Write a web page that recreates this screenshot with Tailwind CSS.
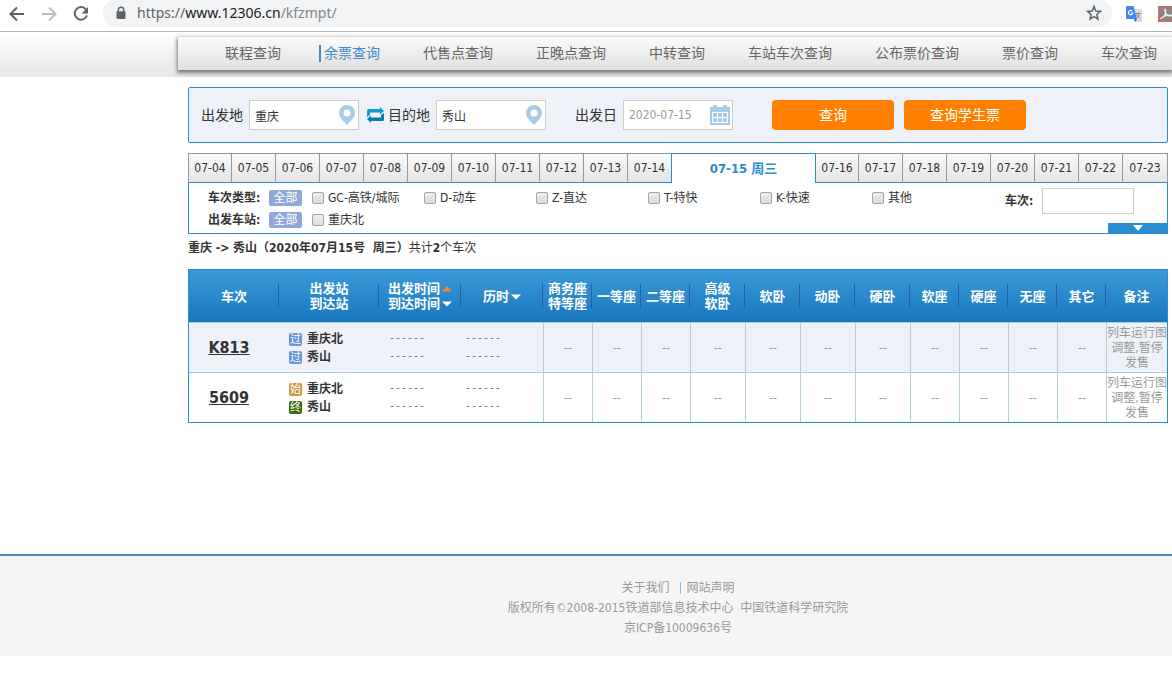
<!DOCTYPE html>
<html lang="zh-CN">
<head>
  <meta charset="UTF-8" />
  <meta name="viewport" content="width=device-width, initial-scale=1.0" />
  <title>余票查询</title>
  <script src="https://cdn.jsdelivr.net/npm/@tailwindcss/browser@4"></script>
</head>
<body class="bg-white text-xs text-[#333] overflow-x-hidden font-['DejaVu_Sans_Condensed','Noto_Sans_CJK_SC',sans-serif]">

  <!-- browser toolbar -->
  <div class="flex items-start h-8 border-b border-[#b4b5b7] overflow-hidden">
    <div class="flex items-center gap-3 h-[27px] pl-[7px] pr-[12px] shrink-0">
      <button type="button" aria-label="后退"><svg class="block size-5" viewBox="0 0 20 20" fill="none" stroke="#5f6368" stroke-width="2"><path d="M17 10H4M10 3.500L3.500 10l6.500 6.500"/></svg></button>
      <button type="button" aria-label="前进"><svg class="block size-5" viewBox="0 0 20 20" fill="none" stroke="#bcbec1" stroke-width="2"><path d="M3 10h13M10 3.500l6.500 6.500L10 16.500"/></svg></button>
      <button type="button" aria-label="重新加载"><svg class="block size-5" viewBox="0 0 20 20"><path d="M15 5.500A6.300 6.300 0 1 0 16 11.500" fill="none" stroke="#5f6368" stroke-width="2"/><path d="M17 3v6.500h-6.500z" fill="#5f6368"/></svg></button>
    </div>
    <div class="flex items-center flex-1 h-7 -mt-px pl-3 pr-2 rounded-full bg-[#f1f3f4]">
      <svg class="block w-3 h-[14px] shrink-0" viewBox="0 0 12 14"><path d="M3.300 6V4a2.700 2.700 0 0 1 5.400 0v2" fill="none" stroke="#5f6368" stroke-width="1.400"/><rect x="1.500" y="5.200" width="9" height="7.800" rx="1" fill="#5f6368"/></svg>
      <div role="textbox" aria-label="地址" class="flex-1 pl-[10px] text-sm leading-5 text-[#80868b] font-['Noto_Sans',sans-serif]"><span class="text-[#5f6368]">https://</span><span class="text-[#202124]">www.12306.cn</span>/kfzmpt/</div>
      <button type="button" aria-label="收藏"><svg class="block size-5" viewBox="0 0 20 20" fill="none" stroke="#5f6368" stroke-width="1.500"><path d="M10 3.600l1.800 4.400 4.700.4-3.600 3.100 1.100 4.600-4-2.500-4 2.500 1.100-4.600L3.500 8.400l4.700-.4z"/></svg></button>
    </div>
    <div class="flex items-center h-[27px] gap-4 pl-[14px] w-[60px] shrink-0 overflow-hidden">
      <svg class="block size-4 shrink-0" viewBox="0 0 16 16"><path d="M6 3h9a1 1 0 0 1 1 1v11a1 1 0 0 1-1 1H9z" fill="#dadce0"/><path d="M9.500 7.500h5M12 6.500v1M13.500 7.500c-.5 2-1.800 3.500-3.500 4.500M10.500 8.500c.7 1.700 2 2.800 3.500 3.500" fill="none" stroke="#5f8f9f"/><path d="M1 0h6.500L11 13H1a1 1 0 0 1-1-1V1a1 1 0 0 1 1-1z" fill="#4285f4"/><path d="M8 13h3l-2 3z" fill="#2b5fc7"/><path d="M6.300 5.200A2.200 2.200 0 1 0 6.800 7H4.800" fill="none" stroke="#fff" stroke-width="1.200"/></svg>
      <svg class="block size-4 shrink-0" viewBox="0 0 16 16"><rect x=".5" y=".5" width="15" height="15" fill="#8d8585" stroke="#e0665c"/><path d="M3 12.500c3-1.500 5-5 4.600-8.500-.2-1.300-1-1-.8.300.4 2.700 2.400 5.600 6 5.700 1.500 0 1.500-1-.3-1-3.500 0-6.500 1-9 3-.9.700-.9.800-.5.500z" fill="none" stroke="#f5f0f0" stroke-width="1.100"/></svg>
    </div>
  </div>

  <!-- site navigation -->
  <div class="h-[45px] pt-[5px] pl-[178px] bg-linear-to-b from-white to-[#e7e7e7]">
    <nav class="flex items-center gap-[43px] h-[33px] pl-[47px] text-sm leading-[17px] text-[#666] whitespace-nowrap bg-linear-to-b from-[#fbfbfb] to-[#e0e0e0] shadow-[0_2px_4px_1px_#777]">
      <a href="#">联程查询</a>
      <a href="#" class="-ml-[5px] pl-[3px] border-l-2 border-[#428bca] text-[#428bca]">余票查询</a>
      <a href="#">代售点查询</a>
      <a href="#">正晚点查询</a>
      <a href="#">中转查询</a>
      <a href="#">车站车次查询</a>
      <a href="#">公布票价查询</a>
      <a href="#">票价查询</a>
      <a href="#">车次查询</a>
    </nav>
  </div>

  <main class="pl-[188px] pr-1 pt-[10px]">
    <!-- search form -->
    <form class="flex items-center h-14 pl-3 border border-[#298cce] rounded-xs bg-[#eef1f8] text-sm">
      <label for="from" class="w-12">出发地</label>
      <div class="relative">
        <input id="from" type="text" value="重庆" class="block w-[110px] h-[30px] pl-[5px] border border-[#cfcdc7] bg-white text-xs" />
        <svg class="absolute right-1 top-[5px] w-4 h-5" viewBox="0 0 16 20"><path d="M8 0a8 8 0 0 1 8 8c0 4.500-4.500 8-8 12C4.500 16 0 12.500 0 8a8 8 0 0 1 8-8zm0 4.500a3.500 3.500 0 1 0 0 7 3.500 3.500 0 0 0 0-7z" fill="#a9cbe6" fill-rule="evenodd"/></svg>
      </div>
      <button type="button" aria-label="交换出发地和目的地" class="ml-2 mr-1"><svg class="block w-[17px] h-4" viewBox="0 0 17 16"><path d="M0 10V3.500A1.500 1.500 0 0 1 1.500 2H13V0l4 4-4 3.500V5.500H3V8z" fill="#0a9bd0"/><path d="M17 6v6.500a1.500 1.500 0 0 1-1.500 1.500H4v2l-4-4 4-3.500v2h10V8z" fill="#087fab"/></svg></button>
      <label for="to" class="w-12">目的地</label>
      <div class="relative">
        <input id="to" type="text" value="秀山" class="block w-[110px] h-[30px] pl-[5px] border border-[#cfcdc7] bg-white text-xs" />
        <svg class="absolute right-1 top-[5px] w-4 h-5" viewBox="0 0 16 20"><path d="M8 0a8 8 0 0 1 8 8c0 4.500-4.500 8-8 12C4.500 16 0 12.500 0 8a8 8 0 0 1 8-8zm0 4.500a3.500 3.500 0 1 0 0 7 3.500 3.500 0 0 0 0-7z" fill="#a9cbe6" fill-rule="evenodd"/></svg>
      </div>
      <label for="date" class="w-12 ml-[29px]">出发日</label>
      <div class="relative">
        <input id="date" type="text" value="2020-07-15" class="block w-[110px] h-[30px] pl-[5px] border border-[#cfcdc7] bg-white text-xs text-[#999]" />
        <svg class="absolute right-[3px] top-[5px] w-5 h-5" viewBox="0 0 20 20"><path d="M0 2h3V0h4v2h6V0h4v2h3v18H0z" fill="#a9cbe6"/><path d="M2 7h16v11H2z" fill="#fff"/><path d="M3 8h4v4H3zM8 8h4v4H8zM13 8h4v4h-4zM3 13h4v4H3zM8 13h4v4H8zM13 13h4v4h-4z" fill="#a9cbe6"/></svg>
      </div>
      <button type="submit" class="w-[122px] h-[30px] ml-[39px] rounded bg-[#ff8000] text-white">查询</button>
      <button type="button" class="w-[122px] h-[30px] ml-[10px] rounded bg-[#ff8000] text-white">查询学生票</button>
    </form>

    <!-- date tabs, filled in by script -->
    <div id="dates" class="grid grid-cols-[repeat(11,44fr)_143fr_repeat(7,44fr)_45fr] mt-[10px]"></div>

    <!-- filters -->
    <div class="relative flex h-[51px] pt-1 pl-[19px] border border-t-0 border-[#298cce]">
      <div>
        <div class="flex items-center h-[22px]">
          <strong class="w-[61px]">车次类型:</strong>
          <button type="button" class="w-[33px] h-4 mr-[10px] rounded-xs bg-[#8fa8d8] text-white leading-4">全部</button>
          <div id="types" class="flex"></div>
        </div>
        <div class="flex items-center h-[22px]">
          <strong class="w-[61px]">出发车站:</strong>
          <button type="button" class="w-[33px] h-4 mr-[10px] rounded-xs bg-[#8fa8d8] text-white leading-4">全部</button>
          <label class="flex items-center gap-1"><input type="checkbox" class="appearance-none size-3 rounded-xs border border-[#a5a5a5] bg-linear-to-b from-[#eee] to-[#ddd] checked:bg-[#298cce]" />重庆北</label>
        </div>
      </div>
      <div class="flex items-center h-[26px] ml-auto mt-px mr-[33px]">
        <label for="train" class="w-[37px] font-bold">车次:</label>
        <input id="train" type="text" class="block w-[92px] h-[26px] border border-[#cfcdc7]" />
      </div>
      <button type="button" aria-label="展开" class="absolute right-0 bottom-0 flex items-center justify-center w-[59px] h-[10px] bg-[#298cce]"><svg class="block w-[10px] h-[6px]" viewBox="0 0 10 6"><path d="M0 0h10L5 6z" fill="#fff"/></svg></button>
    </div>

    <p class="h-[35px] pt-1 leading-5 whitespace-pre"><strong>重庆 -&gt; 秀山（2020年07月15号  周三）</strong>共计<strong>2</strong>个车次</p>

    <!-- results -->
    <table class="w-full table-fixed border-separate border-spacing-0 border border-[#298cce]">
      <colgroup>
        <col class="w-[90px]" /><col class="w-[100px]" /><col class="w-[82px]" /><col class="w-[82px]" />
        <col class="w-[49px]" /><col class="w-[49px]" /><col class="w-[49px]" />
        <col class="w-[55px]" /><col class="w-[55px]" /><col class="w-[55px]" /><col class="w-[55px]" />
        <col class="w-[49px]" /><col class="w-[49px]" /><col class="w-[49px]" /><col class="w-[49px]" />
        <col class="w-[61px]" />
      </colgroup>
      <thead class="bg-linear-to-b from-[#3a9bd9] to-[#1777bd] text-white text-[13px] leading-[15px]">
        <tr id="heads" class="h-[52px]"></tr>
      </thead>
      <tbody id="trains" class="text-[#999] text-center leading-[15px]"></tbody>
    </table>
  </main>

  <footer class="mt-[131px] pt-[22px] pb-[18px] pl-[188px] pr-1 border-t-2 border-[#428bca] bg-[#f5f5f5] text-[#999] text-center leading-5">
    <p><a href="#">关于我们</a><span class="inline-block w-px h-3 ml-[10px] mr-[6px] align-[-2px] bg-[#8ebbe0]"></span><a href="#">网站声明</a></p>
    <p class="whitespace-pre">版权所有©2008-2015铁道部信息技术中心  中国铁道科学研究院</p>
    <p>京ICP备10009636号</p>
  </footer>

  <script>
    const days = ['07-04', '07-05', '07-06', '07-07', '07-08', '07-09', '07-10', '07-11', '07-12', '07-13', '07-14', '07-15 周三', '07-16', '07-17', '07-18', '07-19', '07-20', '07-21', '07-22', '07-23'];
    const current = 11;
    document.getElementById('dates').innerHTML = days.map((d, i) => {
      if (i === current) return `<button type="button" class="h-[30px] border-t border-[#298cce] text-[13px] font-bold text-[#298cce]">${d}</button>`;
      let edge = 'border-r-[#999]';
      if (i === 0) edge = 'border-l border-l-[#999] border-r-[#999]';
      if (i === current - 1) edge = 'border-r-[#298cce]';
      if (i === current + 1) edge = 'border-l border-l-[#298cce] border-r-[#999]';
      return `<button type="button" class="h-[30px] border-t border-r border-b border-t-[#999] border-b-[#298cce] ${edge} bg-linear-to-b from-[#fafafa] to-[#e4e4e4] whitespace-nowrap">${d}</button>`;
    }).join('');

    const types = ['GC-高铁/城际', 'D-动车', 'Z-直达', 'T-特快', 'K-快速', '其他'];
    document.getElementById('types').innerHTML = types.map(t => `
      <label class="flex items-center gap-1 w-28"><input type="checkbox" class="appearance-none size-3 rounded-xs border border-[#a5a5a5] bg-linear-to-b from-[#eee] to-[#ddd] checked:bg-[#298cce]" />${t}</label>
    `).join('');

    const up = '<svg class="inline-block w-[10px] h-[6px] ml-[2px] align-[1px]" viewBox="0 0 10 6"><path d="M0 5.500h10L5 0z" fill="#f08a2c"/></svg>';
    const down = '<svg class="inline-block w-[10px] h-[6px] ml-[2px] align-[1px]" viewBox="0 0 10 6"><path d="M0 .5h10L5 5.500z" fill="#fff"/></svg>';
    const heads = ['车次', '出发站<br>到达站', `出发时间${up}<br>到达时间${down}`, `历时${down}`, '商务座<br>特等座', '一等座', '二等座', '高级<br>软卧', '软卧', '动卧', '硬卧', '软座', '硬座', '无座', '其它', '备注'];
    document.getElementById('heads').innerHTML = heads.map((h, i) => {
      const line = i < heads.length - 1 ? 'bg-[linear-gradient(#2d5fa3,#2d5fa3)] bg-[length:1px_24px] bg-right bg-no-repeat' : '';
      return `<th class="p-0 whitespace-nowrap ${line}">${h}</th>`;
    }).join('');

    const badges = {
      '过': 'bg-[#6795d8]',
      '始': 'bg-[#cf9540]',
      '终': 'bg-[#3c6a06]'
    };
    const trains = [
      { no: 'K813', from: ['过', '重庆北'], to: ['过', '秀山'] },
      { no: '5609', from: ['始', '重庆北'], to: ['终', '秀山'] }
    ];
    const station = ([mark, name]) => `
      <div class="flex items-center gap-[5px] h-[18px]"><span class="w-[13px] h-[13px] rounded-xs text-[11px] leading-[13px] font-normal text-white text-center ${badges[mark]}">${mark}</span>${name}</div>`;
    const dashes = '<div class="h-[18px] leading-[18px]">------</div><div class="h-[18px] leading-[18px]">------</div>';
    document.getElementById('trains').innerHTML = trains.map(t => `
      <tr class="h-[50px] odd:bg-[#eef1f8]">
        <td class="p-0 pr-[10px] border-t border-[#b0cedd]"><a href="#" class="text-base font-bold text-[#333] underline">${t.no}</a></td>
        <td class="p-0 pt-[2px] pl-[10px] border-t border-[#b0cedd] font-bold text-[#333]">${station(t.from)}${station(t.to)}</td>
        <td class="p-0 pl-[10px] border-t border-[#b0cedd] text-left text-[10px] text-[#777] font-['Liberation_Mono',monospace]">${dashes}</td>
        <td class="p-0 pl-1 border-t border-[#b0cedd] text-left text-[10px] text-[#777] font-['Liberation_Mono',monospace]">${dashes}</td>
        ${'<td class="p-0 pt-[2px] border-t border-l border-[#b0cedd]">--</td>'.repeat(11)}
        <td class="p-0 pt-[2px] border-t border-l border-[#b0cedd]">列车运行图调整,暂停发售</td>
      </tr>
    `).join('');
  </script>
</body>
</html>
